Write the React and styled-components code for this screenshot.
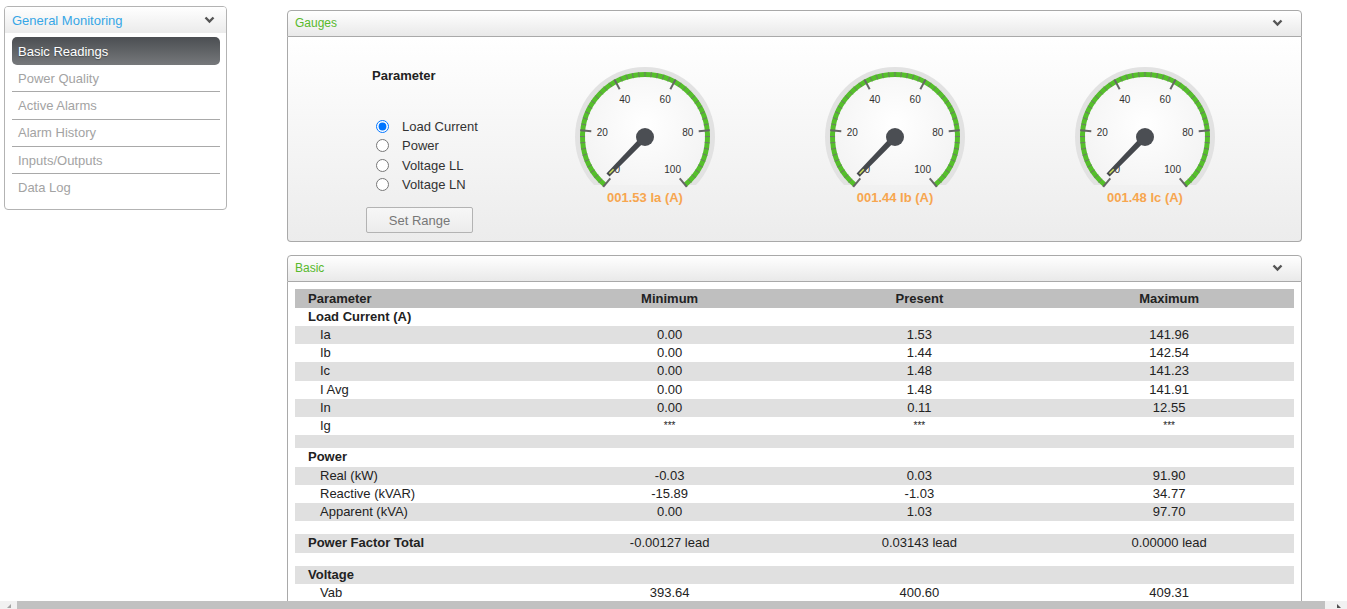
import React from 'react';
import styled, { createGlobalStyle } from 'styled-components';

const GlobalStyle = createGlobalStyle`
  html, body {
    margin: 0;
    padding: 0;
    background: #fff;
    font-family: "Liberation Sans", Arial, sans-serif;
    color: #222;
  }
`;

const Page = styled.div`
  display: flex;
  flex-direction: column;
  height: 100vh;
  overflow: hidden;
`;

const Main = styled.div`
  flex: 1;
  display: flex;
  align-items: flex-start;
  overflow: hidden;
`;

const Sidebar = styled.nav`
  box-sizing: border-box;
  width: 223px;
  margin: 6px 0 0 4px;
  border: 1px solid #b3b3b3;
  border-radius: 4px;
  overflow: hidden;
  flex-shrink: 0;
`;

const SideHeader = styled.div`
  height: 26px;
  display: flex;
  align-items: center;
  justify-content: space-between;
  padding: 0 11px 0 7px;
  background: linear-gradient(#ffffff, #ebebeb);
  color: #36a6e6;
  font-size: 13px;
`;

const NavList = styled.ul`
  list-style: none;
  margin: 0;
  padding: 4px 6px 8px 7px;
`;

const NavItem = styled.li`
  box-sizing: border-box;
  height: ${({ $active }) => ($active ? '28px' : '27.3px')};
  display: flex;
  align-items: center;
  padding-left: 6px;
  font-size: 13px;
  color: ${({ $active }) => ($active ? '#fff' : '#a3a3a3')};
  background: ${({ $active }) => ($active ? 'linear-gradient(#4b4e52, #76787b)' : 'transparent')};
  border-radius: ${({ $active }) => ($active ? '5px' : '0')};
  border-bottom: ${({ $last, $active }) => ($last || $active ? 'none' : '1px solid #a9a9a9')};
  text-shadow: ${({ $active }) => ($active ? '0 1px 1px rgba(0,0,0,0.3)' : 'none')};
`;

const Content = styled.div`
  box-sizing: border-box;
  width: 1015px;
  margin: 10px 0 0 60px;
  display: flex;
  flex-direction: column;
  gap: 13px;
  flex-shrink: 0;
`;

const Panel = styled.section`
  display: flex;
  flex-direction: column;
`;

const PanelHeader = styled.div`
  box-sizing: border-box;
  height: 27px;
  display: flex;
  align-items: center;
  justify-content: space-between;
  padding: 0 18px 1px 7px;
  border: 1px solid #a9a9a9;
  border-radius: 4px 4px 0 0;
  background: linear-gradient(#ffffff, #e9e9e9);
  color: #58b92c;
  font-size: 12px;
`;

const PanelBody = styled.div`
  box-sizing: border-box;
  border: 1px solid #a9a9a9;
  border-top: none;
  border-radius: ${({ $open }) => ($open ? '0' : '0 0 4px 4px')};
  border-bottom: ${({ $open }) => ($open ? 'none' : '1px solid #a9a9a9')};
  background: ${({ $shaded }) => ($shaded ? 'linear-gradient(#ffffff, #ececec)' : '#fff')};
`;

const GaugeBody = styled.div`
  height: 204px;
  display: flex;
`;

const Controls = styled.div`
  box-sizing: border-box;
  width: 232px;
  padding: 31px 0 0 78px;
  display: flex;
  flex-direction: column;
  align-items: flex-start;
`;

const ControlTitle = styled.div`
  font-size: 13px;
  font-weight: bold;
  line-height: 16px;
  padding-left: 6px;
  color: #222;
`;

const RadioGroup = styled.div`
  margin-top: 33px;
  display: flex;
  flex-direction: column;
  padding-left: 10px;
`;

const RadioRow = styled.label`
  height: 19.3px;
  display: flex;
  align-items: center;
  gap: 13px;
  font-size: 13px;
  color: #333;

  input {
    margin: 0;
    width: 13px;
    height: 13px;
  }
`;

const RangeButton = styled.button`
  margin-top: 13px;
  width: 107px;
  height: 26px;
  border: 1px solid #b3b3b3;
  border-radius: 2px;
  background: linear-gradient(#f7f7f7, #ececec);
  color: #777;
  font-family: "Liberation Sans", Arial, sans-serif;
  font-size: 13px;
  padding: 0;
`;

const GaugeSlot = styled.div`
  width: 250px;
  display: flex;
  flex-direction: column;
  align-items: center;
`;

const GaugeLabel = styled.div`
  line-height: 16px;
  font-size: 13px;
  font-weight: bold;
  color: #f7a64f;
`;

const Table = styled.table`
  width: 999px;
  margin: 7px 7px 0;
  border-collapse: collapse;
  table-layout: fixed;
  font-size: 13px;
`;

const HeadCell = styled.th`
  height: 18.8px;
  padding: 0;
  padding-left: ${({ $left }) => ($left ? '13px' : '0')};
  background: #bfbfbf;
  font-weight: bold;
  color: #222;
  text-align: ${({ $left }) => ($left ? 'left' : 'center')};
`;

const Row = styled.tr`
  background: ${({ $shade }) => ($shade ? '#e0e0e0' : '#fff')};
  height: ${({ $blank }) => ($blank ? '13.2px' : '18.2px')};
`;

const Cell = styled.td`
  padding: 0;
  line-height: 18.2px;
  color: #222;
  white-space: nowrap;
  text-align: center;
  font-size: ${({ $small }) => ($small ? '10px' : '13px')};
`;

const LabelCell = styled.td`
  padding: 0 0 0 ${({ $sub }) => ($sub ? '25px' : '13px')};
  line-height: 18.2px;
  font-weight: ${({ $sub }) => ($sub ? 'normal' : 'bold')};
  color: #222;
  white-space: nowrap;
`;

const ScrollTrack = styled.div`
  height: 8px;
  flex-shrink: 0;
  display: flex;
  align-items: stretch;
  background: #f1f1f1;
`;

const ScrollArrow = styled.div`
  width: 17px;
  display: flex;
  align-items: flex-end;
  justify-content: center;
  padding-bottom: 1px;
  box-sizing: border-box;

  &::before {
    content: '';
    border-top: 4px solid transparent;
    ${({ $dir }) => ($dir === 'left' ? 'border-right: 4px solid #a3a3a3;' : 'border-left: 4px solid #505050;')}
  }
`;

const ScrollThumb = styled.div`
  flex: 1;
  background: #c1c1c1;
  margin-right: 5px;
`;

function Chevron() {
  return (
    <svg width="11" height="8" viewBox="0 0 11 8">
      <polyline points="1.5,1.5 5.5,5.5 9.5,1.5" fill="none" stroke="#555" strokeWidth="2.4" />
    </svg>
  );
}

const CX = 125;
const CY = 100;

function polar(r, deg) {
  const a = (deg * Math.PI) / 180;
  return [CX + Math.sin(a) * r, CY - Math.cos(a) * r];
}

function arcPath(r, a0, a1) {
  const [x0, y0] = polar(r, a0);
  const [x1, y1] = polar(r, a1);
  return `M ${x0} ${y0} A ${r} ${r} 0 1 1 ${x1} ${y1}`;
}

const valueAngle = (v) => -140 + v * 2.8;

function Gauge({ value, id }) {
  const minor = [];
  for (let v = 0; v <= 100; v += 2) minor.push(v);
  const major = [0, 20, 40, 60, 80, 100];
  const ang = valueAngle(value);
  return (
    <svg width="250" height="153" viewBox="0 0 250 153">
      <defs>
        <clipPath id={`clip-${id}`}>
          <rect x="0" y="0" width="250" height="148" />
        </clipPath>
        <radialGradient id={`face-${id}`} cx="50%" cy="40%" r="60%">
          <stop offset="0%" stopColor="#ffffff" />
          <stop offset="100%" stopColor="#f2f2f2" />
        </radialGradient>
      </defs>
      <g clipPath={`url(#clip-${id})`}>
        <circle cx={CX} cy={CY} r="70" fill="#e2e2e2" />
        <circle cx={CX} cy={CY} r="65" fill={`url(#face-${id})`} />
      </g>
      <path d={arcPath(62.5, -140, 140)} fill="none" stroke="#55bf2b" strokeWidth="5" />
      {minor.map((v) => {
        const [x0, y0] = polar(60, valueAngle(v));
        const [x1, y1] = polar(65, valueAngle(v));
        return <line key={v} x1={x0} y1={y0} x2={x1} y2={y1} stroke="#6f786a" strokeWidth="1" />;
      })}
      {major.map((v) => {
        const [x0, y0] = polar(54, valueAngle(v));
        const [x1, y1] = polar(65, valueAngle(v));
        return <line key={v} x1={x0} y1={y0} x2={x1} y2={y1} stroke="#666" strokeWidth="2" />;
      })}
      {major.map((v) => {
        const [x, y] = polar(43, valueAngle(v));
        return (
          <text
            key={v}
            x={x}
            y={y + 3.5}
            textAnchor="middle"
            fontSize="10"
            fontFamily="Liberation Sans, Arial, sans-serif"
            fill="#333"
          >
            {v}
          </text>
        );
      })}
      <g transform={`rotate(${ang} ${CX} ${CY})`}>
        <polygon
          points={`${CX - 3},${CY + 4} ${CX - 2.2},${CY - 53} ${CX + 2.2},${CY - 53} ${CX + 3},${CY + 4}`}
          fill="#45484d"
        />
        <line x1={CX} y1={CY - 45} x2={CX} y2={CY - 51} stroke="#cfe35a" strokeWidth="1.4" />
      </g>
      <circle cx={CX} cy={CY} r="9" fill="#4b4e53" />
    </svg>
  );
}

const navItems = ['Basic Readings', 'Power Quality', 'Active Alarms', 'Alarm History', 'Inputs/Outputs', 'Data Log'];

const gauges = [
  { value: 1.53, text: '001.53 Ia (A)' },
  { value: 1.44, text: '001.44 Ib (A)' },
  { value: 1.48, text: '001.48 Ic (A)' },
];

const rows = [
  { group: 'Load Current (A)' },
  { label: 'Ia', min: '0.00', pre: '1.53', max: '141.96' },
  { label: 'Ib', min: '0.00', pre: '1.44', max: '142.54' },
  { label: 'Ic', min: '0.00', pre: '1.48', max: '141.23' },
  { label: 'I Avg', min: '0.00', pre: '1.48', max: '141.91' },
  { label: 'In', min: '0.00', pre: '0.11', max: '12.55' },
  { label: 'Ig', min: '***', pre: '***', max: '***', small: true },
  { blank: true },
  { group: 'Power' },
  { label: 'Real (kW)', min: '-0.03', pre: '0.03', max: '91.90' },
  { label: 'Reactive (kVAR)', min: '-15.89', pre: '-1.03', max: '34.77' },
  { label: 'Apparent (kVA)', min: '0.00', pre: '1.03', max: '97.70' },
  { blank: true },
  { group: 'Power Factor Total', min: '-0.00127 lead', pre: '0.03143 lead', max: '0.00000 lead' },
  { blank: true },
  { group: 'Voltage' },
  { label: 'Vab', min: '393.64', pre: '400.60', max: '409.31' },
];

export default function App() {
  return (
    <Page>
      <GlobalStyle />
      <Main>
        <Sidebar>
          <SideHeader>
            General Monitoring
            <Chevron />
          </SideHeader>
          <NavList>
            {navItems.map((item, i) => (
              <NavItem key={item} $active={i === 0} $last={i === navItems.length - 1}>
                {item}
              </NavItem>
            ))}
          </NavList>
        </Sidebar>

        <Content>
          <Panel>
            <PanelHeader>
              Gauges
              <Chevron />
            </PanelHeader>
            <PanelBody $shaded>
              <GaugeBody>
                <Controls>
                  <ControlTitle>Parameter</ControlTitle>
                  <RadioGroup>
                    {['Load Current', 'Power', 'Voltage LL', 'Voltage LN'].map((p, i) => (
                      <RadioRow key={p}>
                        <input type="radio" name="param" defaultChecked={i === 0} />
                        {p}
                      </RadioRow>
                    ))}
                  </RadioGroup>
                  <RangeButton>Set Range</RangeButton>
                </Controls>
                {gauges.map((g, i) => (
                  <GaugeSlot key={g.text}>
                    <Gauge value={g.value} id={i} />
                    <GaugeLabel>{g.text}</GaugeLabel>
                  </GaugeSlot>
                ))}
              </GaugeBody>
            </PanelBody>
          </Panel>

          <Panel>
            <PanelHeader>
              Basic
              <Chevron />
            </PanelHeader>
            <PanelBody $open>
              <Table>
                <thead>
                  <tr>
                    <HeadCell $left>Parameter</HeadCell>
                    <HeadCell>Minimum</HeadCell>
                    <HeadCell>Present</HeadCell>
                    <HeadCell>Maximum</HeadCell>
                  </tr>
                </thead>
                <tbody>
                  {rows.map((r, i) => {
                    const shade = i % 2 === 1;
                    if (r.blank) {
                      return (
                        <Row key={i} $shade={shade} $blank>
                          <td colSpan={4} />
                        </Row>
                      );
                    }
                    return (
                      <Row key={i} $shade={shade}>
                        <LabelCell $sub={!r.group}>{r.group || r.label}</LabelCell>
                        <Cell $small={r.small}>{r.min}</Cell>
                        <Cell $small={r.small}>{r.pre}</Cell>
                        <Cell $small={r.small}>{r.max}</Cell>
                      </Row>
                    );
                  })}
                </tbody>
              </Table>
            </PanelBody>
          </Panel>
        </Content>
      </Main>
      <ScrollTrack>
        <ScrollArrow $dir="left" />
        <ScrollThumb />
        <ScrollArrow $dir="right" />
      </ScrollTrack>
    </Page>
  );
}
